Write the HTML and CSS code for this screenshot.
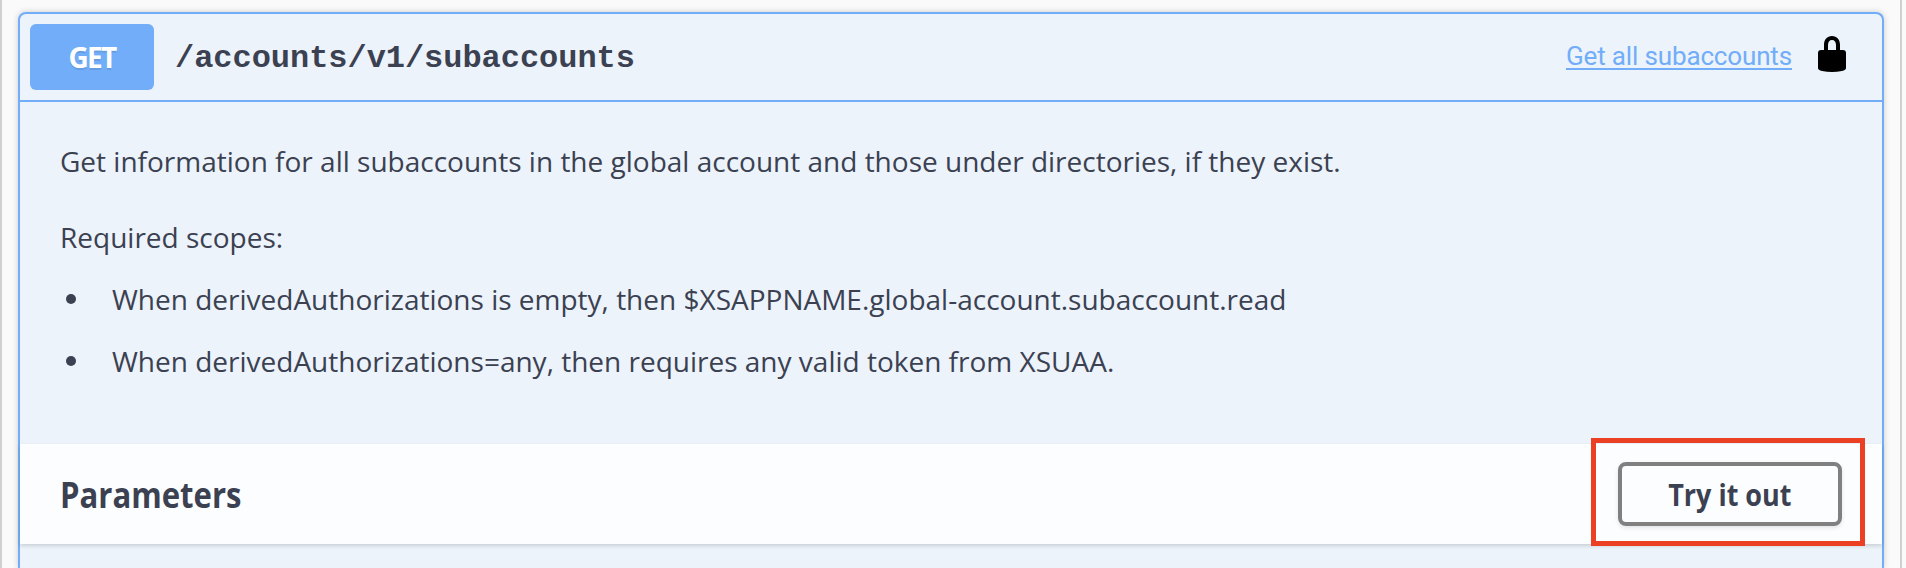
FILE: index.html
```html
<!DOCTYPE html>
<html lang="en">
<head>
<meta charset="utf-8">
<title>Subaccounts API</title>
<link rel="stylesheet" href="styles.css">
</head>
<body>
<main class="section">
  <article class="operation">
    <header class="summary">
      <span class="method">GET</span>
      <code class="path">/accounts/v1/subaccounts</code>
      <a class="summary-link" href="#">Get all subaccounts</a>
      <svg class="lock" viewBox="0 0 28 36" aria-hidden="true">
        <path d="M6 14V9C6 3.500 9 0 14 0s8 3.500 8 9v5h3q3 0 3 3v15q0 2-4 3-10 2-20 0-4-1-4-3V17q0-3 3-3zM10 14h8V9c0-3-1.300-5-4-5s-4 2-4 5z"/>
      </svg>
    </header>
    <div class="description">
      <p class="intro">Get information for all subaccounts in the global account and those under directories, if they exist.</p>
      <p class="scopes-title">Required scopes:</p>
      <ul class="scopes">
        <li class="scope">When derivedAuthorizations is empty, then $XSAPPNAME.global-account.subaccount.read</li>
        <li class="scope">When derivedAuthorizations=any, then requires any valid token from XSUAA.</li>
      </ul>
    </div>
    <section class="parameters">
      <h4 class="parameters-title">Parameters</h4>
      <div class="highlight"><button class="try-out"><span class="try-label">Try it out</span></button></div>
    </section>
  </article>
</main>
</body>
</html>
```
FILE: styles.css
```css
* { box-sizing: border-box; }
body {
  margin: 0;
  background: #fafafa;
  color: #3b4151;
  font-family: "Open Sans", "Noto Sans", sans-serif;
}
.section {
  width: 1902px;
  height: 568px;
  padding: 12px 16px 0;
  border: solid #d0d0d0;
  border-width: 0 2px;
}
.operation {
  height: 556px;
  border: 2px solid #71adf8;
  border-bottom: 0;
  border-radius: 8px 8px 0 0;
  background: #ecf3fb;
  box-shadow: 0 0 6px rgba(0, 0, 0, .19);
}
.summary {
  display: flex;
  align-items: center;
  height: 88px;
  padding: 0 36px 0 10px;
  border-bottom: 2px solid #71adf8;
}
.method {
  width: 124px;
  height: 66px;
  border-radius: 6px;
  background: #71adf8;
  color: #fff;
  font-size: 28px;
  font-weight: 700;
  line-height: 67px;
  letter-spacing: -1.8px;
  text-align: center;
  text-shadow: 0 2px 0 rgba(0, 0, 0, .1);
}
.path {
  margin: 4px 0 0 21px;
  font: 700 32px/40px "Courier 10 Pitch", "Courier New", "Liberation Mono", monospace;
  letter-spacing: -.04px;
}
.summary-link {
  width: 226px;
  margin-left: auto;
  padding-top: 1px;
  border-bottom: 2px solid #71adf8;
  color: #71adf8;
  font-family: Roboto, sans-serif;
  font-size: 26px;
  line-height: 23px;
  letter-spacing: -.15px;
  text-decoration: none;
  white-space: nowrap;
}
.lock { width: 28px; height: 36px; margin: 0 0 6px 26px; }
.description {
  height: 342px;
  padding: 39px 40px 0;
  font-size: 28px;
  line-height: 40px;
  white-space: nowrap;
}
.intro, .scopes-title { margin: 0; }
.scopes-title { margin-top: 36px; }
.scopes { margin: 22px 0 0; padding: 0; list-style: none; }
.scope { display: flex; align-items: center; }
.scope + .scope { margin-top: 22px; }
.scope::before {
  content: "";
  width: 10px;
  height: 10px;
  margin: 0 36px 1px 6px;
  border-radius: 50%;
  background: #3b4151;
}
.parameters {
  display: flex;
  align-items: center;
  justify-content: space-between;
  height: 100px;
  padding: 0 17px 0 40px;
  background: #fcfdff;
  box-shadow: 0 2px 4px rgba(0, 0, 0, .15);
}
.parameters-title {
  margin: 1px 0 0;
  font-size: 35px;
  font-weight: 700;
  transform: scaleX(.888);
  transform-origin: left;
}
.highlight {
  display: grid;
  place-items: center;
  width: 274px;
  height: 108px;
  margin-top: -4px;
  border: 5px solid #ec4025;
}
.try-out {
  width: 224px;
  height: 64px;
  margin: 4px 0 0 4px;
  padding: 0;
  border: 4px solid #808080;
  border-radius: 8px;
  background: transparent;
  box-shadow: 0 2px 4px rgba(0, 0, 0, .1);
  color: #3b4151;
  font: 700 31px/48px "Open Sans", sans-serif;
}
.try-label { display: inline-block; transform: scaleX(.87); white-space: nowrap; }
```
